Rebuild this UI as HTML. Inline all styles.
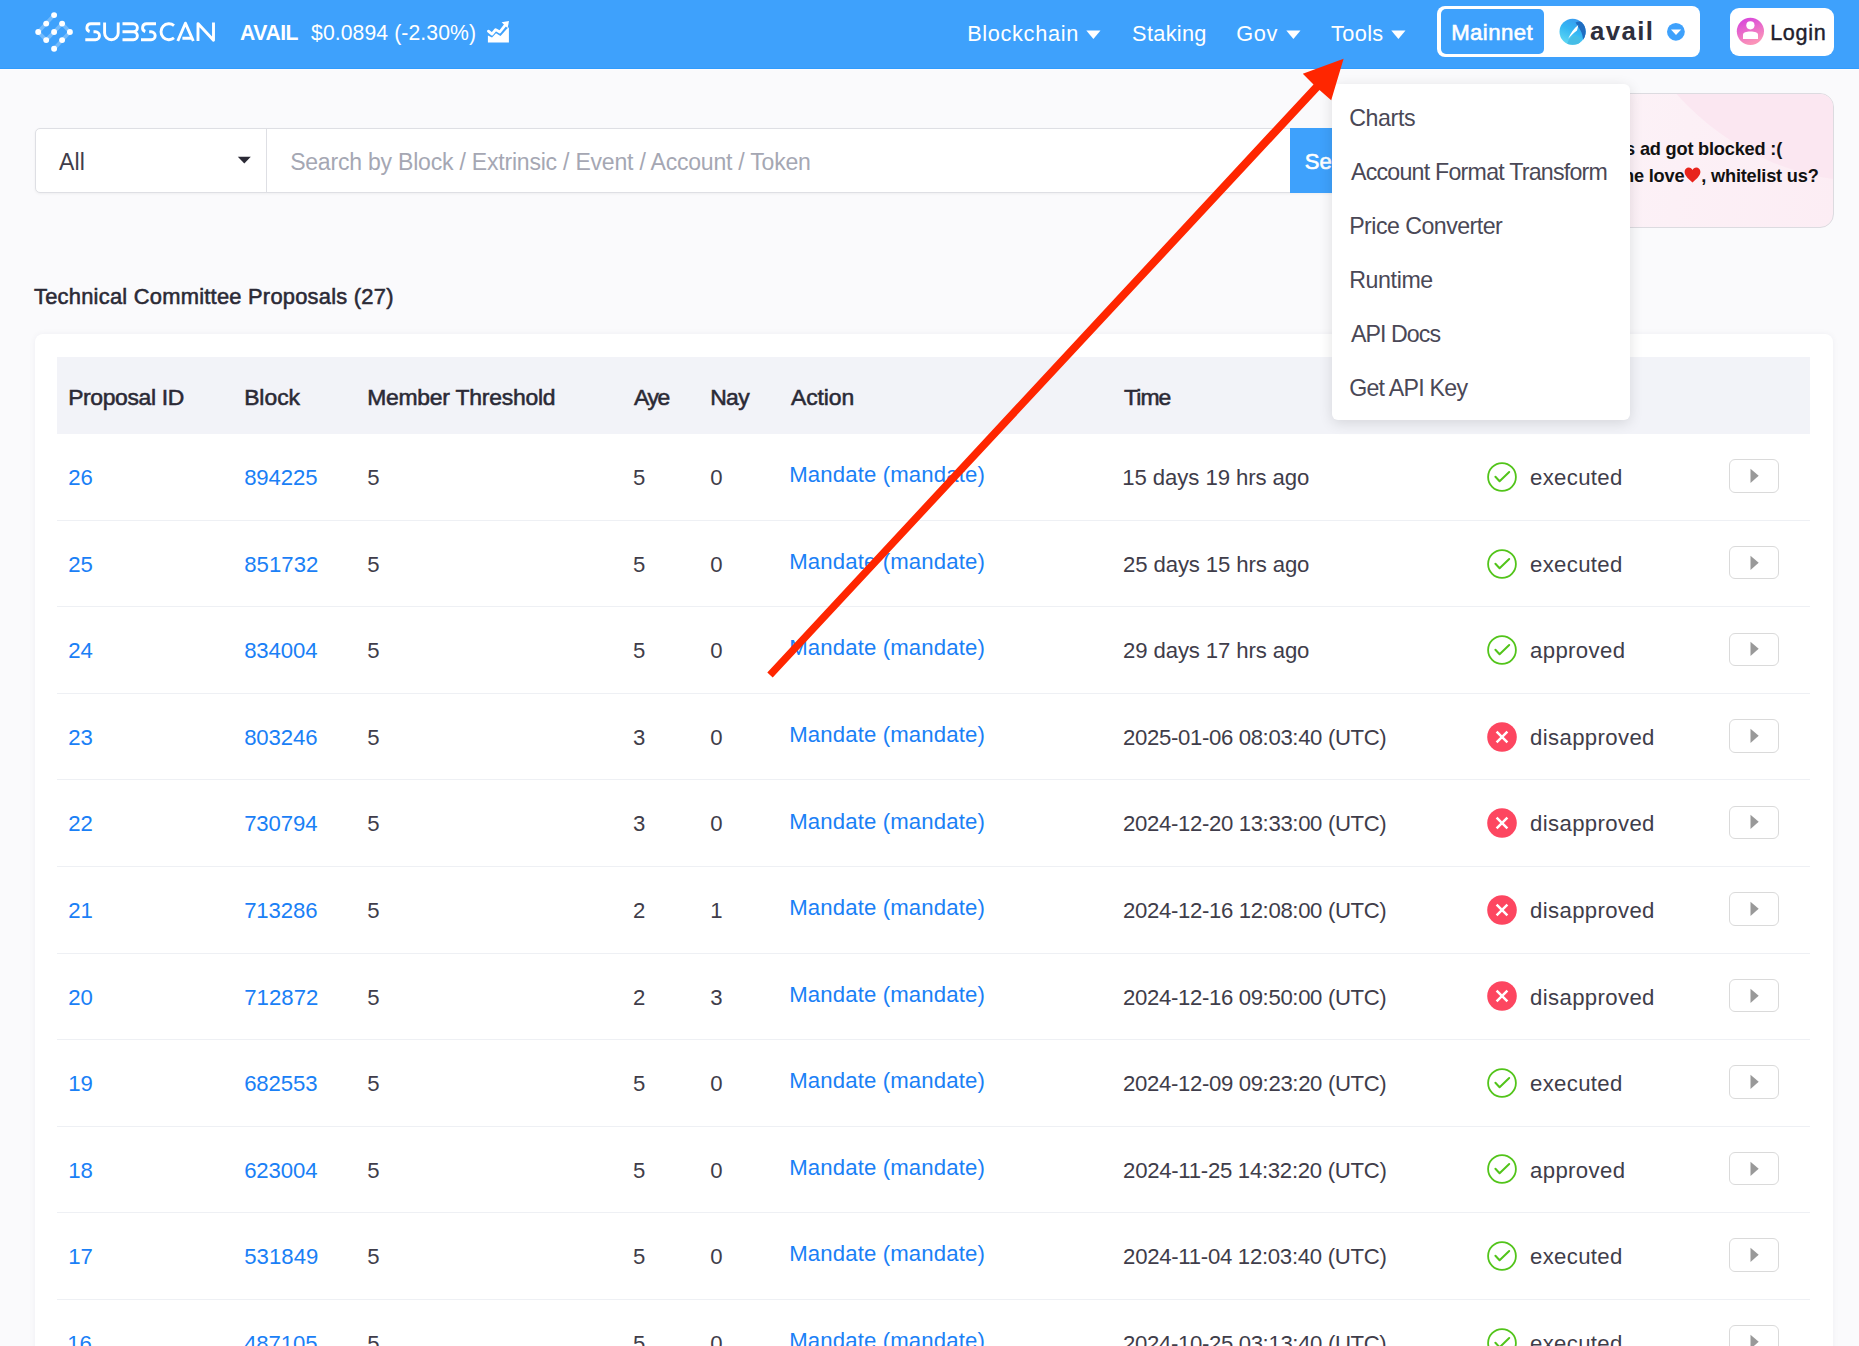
<!DOCTYPE html>
<html><head><meta charset="utf-8">
<style>
html,body{margin:0;padding:0;}
body{width:1859px;height:1346px;overflow:hidden;position:relative;background:#fafafc;font-family:"Liberation Sans",sans-serif;}
.t{position:absolute;white-space:nowrap;line-height:1;}
.abs{position:absolute;}
</style></head><body>
<div class="abs" style="left:0;top:0;width:1859px;height:68px;background:#3ea1fc;"></div>
<div class="abs" style="left:0;top:68px;width:1859px;height:1px;background:#309cfd;"></div>
<div class="abs" style="left:0;top:69px;width:1859px;height:1px;background:#fdfdff;"></div>
<svg class="abs" style="left:0;top:0" width="240" height="68" viewBox="0 0 240 68"><polyline points="54.1,15.1 38.2,32 46.2,40.1 62.1,23.6 69.9,32 54.1,48.7" fill="none" stroke="rgba(255,255,255,0.28)" stroke-width="3.6"/><circle cx="54.1" cy="15.1" r="2.95" fill="#fff"/><circle cx="46.2" cy="23.6" r="2.95" fill="#fff"/><circle cx="62.1" cy="23.6" r="2.95" fill="#fff"/><circle cx="38.2" cy="32" r="2.95" fill="#fff"/><circle cx="54.1" cy="32" r="2.95" fill="#fff"/><circle cx="69.9" cy="32" r="2.95" fill="#fff"/><circle cx="46.2" cy="40.1" r="2.95" fill="#fff"/><circle cx="62.1" cy="40.1" r="2.95" fill="#fff"/><circle cx="54.1" cy="48.7" r="2.95" fill="#fff"/><path d="M100.3,23.8 H90.8 A3.95,3.95 0 0 0 89.6,31.5 M93.5,31.75 H95.5 A3.95,3.95 0 0 1 95.5,39.7 H85.3" fill="none" stroke="#fff" stroke-width="2.9" stroke-linejoin="round"/><path d="M104.6,22.5 V32.9 A6.8,6.8 0 0 0 118.2,32.9 V22.5" fill="none" stroke="#fff" stroke-width="2.9" stroke-linejoin="round"/><path d="M122.5,23.8 H133.4 A3.97,3.97 0 0 1 133.4,31.75 H122.5 M133.4,31.75 A3.97,3.97 0 0 1 133.4,39.7 H122.5" fill="none" stroke="#fff" stroke-width="2.9" stroke-linejoin="round"/><path d="M156,23.8 H146.5 A3.95,3.95 0 0 0 145.3,31.5 M149.2,31.75 H151.2 A3.95,3.95 0 0 1 151.2,39.7 H141" fill="none" stroke="#fff" stroke-width="2.9" stroke-linejoin="round"/><path d="M174,25.6 A7.95,7.95 0 1 0 174,37.9" fill="none" stroke="#fff" stroke-width="2.9" stroke-linejoin="round"/><path d="M177.8,41 L185.4,23.2 L193.3,41 M182.4,38.2 H191.4" fill="none" stroke="#fff" stroke-width="2.9" stroke-linejoin="round"/><path d="M198,41 V23.6 L213.5,40.2 V22.5" fill="none" stroke="#fff" stroke-width="2.9" stroke-linejoin="round"/></svg>
<svg class="abs" style="left:482px;top:16px" width="32" height="32" viewBox="0 0 32 32"><path d="M5.9,26.6 V19.5 L10,21.4 L14,17.3 L18.5,19.9 L25,12.8 L26.9,11.2 V26.6 Z" fill="#fff"/><path d="M6.4,15.2 L10,18.1 L13.6,13.6 L17.8,16 L23.2,9.2" fill="none" stroke="#fff" stroke-width="2.8" stroke-linejoin="round" stroke-linecap="round"/><path d="M19.6,6.2 L27,5 L25.6,12.3 Z" fill="#fff"/></svg>
<svg class="abs" style="left:1086px;top:30px" width="15" height="10" viewBox="0 0 15 10"><path d="M0.3,0.6 H14.5 L7.4,8.9 Z" fill="#fff"/></svg>
<svg class="abs" style="left:1286px;top:30px" width="15" height="10" viewBox="0 0 15 10"><path d="M0.3,0.6 H14.5 L7.4,8.9 Z" fill="#fff"/></svg>
<svg class="abs" style="left:1391px;top:30px" width="15" height="10" viewBox="0 0 15 10"><path d="M0.3,0.6 H14.5 L7.4,8.9 Z" fill="#fff"/></svg>
<div class="abs" style="left:1437px;top:6px;width:263px;height:51px;background:#fff;border-radius:8px;"></div>
<div class="abs" style="left:1440.5px;top:9px;width:103.5px;height:45px;background:#3ea1fc;border-radius:5px;"></div>
<svg class="abs" style="left:1558px;top:17px" width="30" height="30" viewBox="0 0 30 30"><defs><linearGradient id="ag" x1="0.7" y1="0" x2="0.2" y2="1"><stop offset="0" stop-color="#3b95f0"/><stop offset="0.45" stop-color="#34b6f3"/><stop offset="1" stop-color="#6ae0f2"/></linearGradient><clipPath id="ac"><circle cx="14.6" cy="14.75" r="13.1"/></clipPath></defs><g clip-path="url(#ac)"><rect x="0" y="0" width="30" height="30" fill="url(#ag)"/><path d="M17.5,5.5 C21,4 25,4.5 27.5,6 L29,28 L25,27 C25.5,22 24.5,17 22.5,13.5 C21,11 19.5,8.5 17.5,5.5 Z" fill="#1f6cc0"/><path d="M9,29 C9.5,24 11.5,21 15,19.5 C18.5,18 21,19.5 22,22.5 C22.5,25 21.5,28 19,30 Z" fill="#46bde6"/><path d="M20.2,8 C16,11.5 12.5,16 10.2,21.8 C13,18.5 16,15.5 19,13.5 C19.6,11.5 20,9.8 20.2,8 Z" fill="#fff"/></g></svg>
<svg class="abs" style="left:1666px;top:22px" width="20" height="20" viewBox="0 0 20 20"><circle cx="9.9" cy="9.8" r="8.9" fill="#3ea1fc"/><path d="M5,7.4 H15.2 L10,13 Z" fill="#fff"/></svg>
<div class="abs" style="left:1730px;top:8px;width:104px;height:48px;background:#fff;border-radius:9px;"></div>
<svg class="abs" style="left:1736px;top:17px" width="30" height="30" viewBox="0 0 30 30"><defs><linearGradient id="lg" x1="0" y1="0" x2="0.4" y2="1"><stop offset="0" stop-color="#d33be0"/><stop offset="1" stop-color="#fb93b8"/></linearGradient></defs><circle cx="14.4" cy="14.3" r="13.6" fill="url(#lg)"/><circle cx="14.4" cy="8.3" r="4.1" fill="#fff"/><path d="M7,21.9 V17.8 C7,15.6 10,14.6 14.4,14.6 C18.8,14.6 22,15.6 22,17.8 V21.9 Z" fill="#fff"/></svg>
<div class="abs" style="left:35px;top:128px;width:1300px;height:63px;background:#fff;border:1px solid #dedfe4;border-radius:5px 0 0 5px;box-shadow:0 1px 3px rgba(0,0,0,0.05);"></div>
<div class="abs" style="left:266px;top:129px;width:1px;height:63px;background:#dedfe4;"></div>
<svg class="abs" style="left:237px;top:156px" width="15" height="9" viewBox="0 0 15 9"><path d="M0.8,0.8 H13.8 L7.3,7.6 Z" fill="#2b2a36"/></svg>
<div class="abs" style="left:1290px;top:128px;width:80px;height:65px;background:#3ea1fc;"></div>
<div class="abs" style="left:1450px;top:93px;width:382px;height:133px;border:1px solid #dcdbe0;border-radius:14px;background:linear-gradient(100deg,#fdf5f9 0%,#fcf0f6 60%,#fcedf4 100%);overflow:hidden;"><div class="abs" style="left:160px;top:-434px;width:522px;height:522px;border-radius:50%;background:#fbe7f1;"></div></div>
<div class="abs" style="left:35px;top:334px;width:1798px;height:1100px;background:#fff;border-radius:8px;box-shadow:0 0 6px rgba(40,40,80,0.05);"></div>
<div class="abs" style="left:57px;top:357px;width:1753px;height:77.4px;background:#f2f3f8;"></div>
<div class="abs" style="left:57px;top:520px;width:1753px;height:1px;background:#eef0f4;"></div>
<div class="abs" style="left:57px;top:606px;width:1753px;height:1px;background:#eef0f4;"></div>
<div class="abs" style="left:57px;top:693px;width:1753px;height:1px;background:#eef0f4;"></div>
<div class="abs" style="left:57px;top:779px;width:1753px;height:1px;background:#eef0f4;"></div>
<div class="abs" style="left:57px;top:866px;width:1753px;height:1px;background:#eef0f4;"></div>
<div class="abs" style="left:57px;top:953px;width:1753px;height:1px;background:#eef0f4;"></div>
<div class="abs" style="left:57px;top:1039px;width:1753px;height:1px;background:#eef0f4;"></div>
<div class="abs" style="left:57px;top:1126px;width:1753px;height:1px;background:#eef0f4;"></div>
<div class="abs" style="left:57px;top:1212px;width:1753px;height:1px;background:#eef0f4;"></div>
<div class="abs" style="left:57px;top:1299px;width:1753px;height:1px;background:#eef0f4;"></div>
<div class="abs" style="left:57px;top:1385px;width:1753px;height:1px;background:#eef0f4;"></div>
<svg class="abs" style="left:1486px;top:461.00px" width="32" height="32" viewBox="0 0 32 32"><circle cx="16" cy="16" r="13.9" fill="none" stroke="#52c41a" stroke-width="1.8"/><path d="M9.4,15.8 L13.6,20.3 L23.2,11" fill="none" stroke="#52c41a" stroke-width="2" stroke-linecap="round" stroke-linejoin="round"/></svg>
<div class="abs" style="left:1729px;top:459.40px;width:47.5px;height:31.5px;border:1px solid #dadada;border-radius:6px;background:#fff;"></div>
<svg class="abs" style="left:1748px;top:468.20px" width="14" height="18" viewBox="0 0 14 18"><path d="M2.5,0.7 L10.7,7.8 L2.5,14.9 Z" fill="#999999"/></svg>
<svg class="abs" style="left:1486px;top:547.56px" width="32" height="32" viewBox="0 0 32 32"><circle cx="16" cy="16" r="13.9" fill="none" stroke="#52c41a" stroke-width="1.8"/><path d="M9.4,15.8 L13.6,20.3 L23.2,11" fill="none" stroke="#52c41a" stroke-width="2" stroke-linecap="round" stroke-linejoin="round"/></svg>
<div class="abs" style="left:1729px;top:545.96px;width:47.5px;height:31.5px;border:1px solid #dadada;border-radius:6px;background:#fff;"></div>
<svg class="abs" style="left:1748px;top:554.76px" width="14" height="18" viewBox="0 0 14 18"><path d="M2.5,0.7 L10.7,7.8 L2.5,14.9 Z" fill="#999999"/></svg>
<svg class="abs" style="left:1486px;top:634.12px" width="32" height="32" viewBox="0 0 32 32"><circle cx="16" cy="16" r="13.9" fill="none" stroke="#52c41a" stroke-width="1.8"/><path d="M9.4,15.8 L13.6,20.3 L23.2,11" fill="none" stroke="#52c41a" stroke-width="2" stroke-linecap="round" stroke-linejoin="round"/></svg>
<div class="abs" style="left:1729px;top:632.52px;width:47.5px;height:31.5px;border:1px solid #dadada;border-radius:6px;background:#fff;"></div>
<svg class="abs" style="left:1748px;top:641.32px" width="14" height="18" viewBox="0 0 14 18"><path d="M2.5,0.7 L10.7,7.8 L2.5,14.9 Z" fill="#999999"/></svg>
<svg class="abs" style="left:1486px;top:720.68px" width="32" height="32" viewBox="0 0 32 32"><circle cx="16" cy="16" r="14.8" fill="#fd4660"/><path d="M10.6,10.6 L21.4,21.4 M21.4,10.6 L10.6,21.4" stroke="#fff" stroke-width="2.5" stroke-linecap="butt"/></svg>
<div class="abs" style="left:1729px;top:719.08px;width:47.5px;height:31.5px;border:1px solid #dadada;border-radius:6px;background:#fff;"></div>
<svg class="abs" style="left:1748px;top:727.88px" width="14" height="18" viewBox="0 0 14 18"><path d="M2.5,0.7 L10.7,7.8 L2.5,14.9 Z" fill="#999999"/></svg>
<svg class="abs" style="left:1486px;top:807.24px" width="32" height="32" viewBox="0 0 32 32"><circle cx="16" cy="16" r="14.8" fill="#fd4660"/><path d="M10.6,10.6 L21.4,21.4 M21.4,10.6 L10.6,21.4" stroke="#fff" stroke-width="2.5" stroke-linecap="butt"/></svg>
<div class="abs" style="left:1729px;top:805.64px;width:47.5px;height:31.5px;border:1px solid #dadada;border-radius:6px;background:#fff;"></div>
<svg class="abs" style="left:1748px;top:814.44px" width="14" height="18" viewBox="0 0 14 18"><path d="M2.5,0.7 L10.7,7.8 L2.5,14.9 Z" fill="#999999"/></svg>
<svg class="abs" style="left:1486px;top:893.80px" width="32" height="32" viewBox="0 0 32 32"><circle cx="16" cy="16" r="14.8" fill="#fd4660"/><path d="M10.6,10.6 L21.4,21.4 M21.4,10.6 L10.6,21.4" stroke="#fff" stroke-width="2.5" stroke-linecap="butt"/></svg>
<div class="abs" style="left:1729px;top:892.20px;width:47.5px;height:31.5px;border:1px solid #dadada;border-radius:6px;background:#fff;"></div>
<svg class="abs" style="left:1748px;top:901.00px" width="14" height="18" viewBox="0 0 14 18"><path d="M2.5,0.7 L10.7,7.8 L2.5,14.9 Z" fill="#999999"/></svg>
<svg class="abs" style="left:1486px;top:980.36px" width="32" height="32" viewBox="0 0 32 32"><circle cx="16" cy="16" r="14.8" fill="#fd4660"/><path d="M10.6,10.6 L21.4,21.4 M21.4,10.6 L10.6,21.4" stroke="#fff" stroke-width="2.5" stroke-linecap="butt"/></svg>
<div class="abs" style="left:1729px;top:978.76px;width:47.5px;height:31.5px;border:1px solid #dadada;border-radius:6px;background:#fff;"></div>
<svg class="abs" style="left:1748px;top:987.56px" width="14" height="18" viewBox="0 0 14 18"><path d="M2.5,0.7 L10.7,7.8 L2.5,14.9 Z" fill="#999999"/></svg>
<svg class="abs" style="left:1486px;top:1066.92px" width="32" height="32" viewBox="0 0 32 32"><circle cx="16" cy="16" r="13.9" fill="none" stroke="#52c41a" stroke-width="1.8"/><path d="M9.4,15.8 L13.6,20.3 L23.2,11" fill="none" stroke="#52c41a" stroke-width="2" stroke-linecap="round" stroke-linejoin="round"/></svg>
<div class="abs" style="left:1729px;top:1065.32px;width:47.5px;height:31.5px;border:1px solid #dadada;border-radius:6px;background:#fff;"></div>
<svg class="abs" style="left:1748px;top:1074.12px" width="14" height="18" viewBox="0 0 14 18"><path d="M2.5,0.7 L10.7,7.8 L2.5,14.9 Z" fill="#999999"/></svg>
<svg class="abs" style="left:1486px;top:1153.48px" width="32" height="32" viewBox="0 0 32 32"><circle cx="16" cy="16" r="13.9" fill="none" stroke="#52c41a" stroke-width="1.8"/><path d="M9.4,15.8 L13.6,20.3 L23.2,11" fill="none" stroke="#52c41a" stroke-width="2" stroke-linecap="round" stroke-linejoin="round"/></svg>
<div class="abs" style="left:1729px;top:1151.88px;width:47.5px;height:31.5px;border:1px solid #dadada;border-radius:6px;background:#fff;"></div>
<svg class="abs" style="left:1748px;top:1160.68px" width="14" height="18" viewBox="0 0 14 18"><path d="M2.5,0.7 L10.7,7.8 L2.5,14.9 Z" fill="#999999"/></svg>
<svg class="abs" style="left:1486px;top:1240.04px" width="32" height="32" viewBox="0 0 32 32"><circle cx="16" cy="16" r="13.9" fill="none" stroke="#52c41a" stroke-width="1.8"/><path d="M9.4,15.8 L13.6,20.3 L23.2,11" fill="none" stroke="#52c41a" stroke-width="2" stroke-linecap="round" stroke-linejoin="round"/></svg>
<div class="abs" style="left:1729px;top:1238.44px;width:47.5px;height:31.5px;border:1px solid #dadada;border-radius:6px;background:#fff;"></div>
<svg class="abs" style="left:1748px;top:1247.24px" width="14" height="18" viewBox="0 0 14 18"><path d="M2.5,0.7 L10.7,7.8 L2.5,14.9 Z" fill="#999999"/></svg>
<svg class="abs" style="left:1486px;top:1326.60px" width="32" height="32" viewBox="0 0 32 32"><circle cx="16" cy="16" r="13.9" fill="none" stroke="#52c41a" stroke-width="1.8"/><path d="M9.4,15.8 L13.6,20.3 L23.2,11" fill="none" stroke="#52c41a" stroke-width="2" stroke-linecap="round" stroke-linejoin="round"/></svg>
<div class="abs" style="left:1729px;top:1325.00px;width:47.5px;height:31.5px;border:1px solid #dadada;border-radius:6px;background:#fff;"></div>
<svg class="abs" style="left:1748px;top:1333.80px" width="14" height="18" viewBox="0 0 14 18"><path d="M2.5,0.7 L10.7,7.8 L2.5,14.9 Z" fill="#999999"/></svg>
<div class="abs" style="left:1332px;top:84px;width:298px;height:336px;background:#fff;border-radius:6px;box-shadow:0 3px 14px rgba(0,0,0,0.12);z-index:5;"></div>
<div id="texts" style="position:absolute;left:0;top:0;width:1859px;height:1346px;">
<div id="avail" class="t" style="left:240.10px;top:21.81px;font-size:21.16px;font-weight:700;color:#ffffff;letter-spacing:-0.472px;">AVAIL</div>
<div id="price" class="t" style="left:311.02px;top:21.81px;font-size:21.16px;font-weight:400;color:#ffffff;letter-spacing:0.102px;">$0.0894 (-2.30%)</div>
<div id="nav1" class="t" style="left:967.18px;top:22.72px;font-size:21.74px;font-weight:400;color:#ffffff;letter-spacing:0.660px;">Blockchain</div>
<div id="nav2" class="t" style="left:1132.08px;top:22.72px;font-size:21.74px;font-weight:400;color:#ffffff;letter-spacing:0.315px;">Staking</div>
<div id="nav3" class="t" style="left:1236.15px;top:22.72px;font-size:21.74px;font-weight:400;color:#ffffff;letter-spacing:0.675px;">Gov</div>
<div id="nav4" class="t" style="left:1331.09px;top:22.72px;font-size:21.74px;font-weight:400;color:#ffffff;letter-spacing:0.338px;">Tools</div>
<div id="mainnet" class="t" style="left:1451.20px;top:22.15px;font-size:22.17px;font-weight:400;color:#ffffff;letter-spacing:0.420px;-webkit-text-stroke:0.6px #fff;">Mainnet</div>
<div id="availtxt" class="t" style="left:1590.10px;top:18.77px;font-size:25.80px;font-weight:700;color:#2e2f3d;letter-spacing:1.350px;">avail</div>
<div id="login" class="t" style="left:1770.14px;top:22.24px;font-size:21.59px;font-weight:400;color:#22202c;letter-spacing:0.720px;-webkit-text-stroke:0.4px #22202c;">Login</div>
<div id="all" class="t" style="left:59.05px;top:150.51px;font-size:23.04px;font-weight:400;color:#3f3d4a;letter-spacing:0.090px;">All</div>
<div id="ph" class="t" style="left:290.14px;top:150.51px;font-size:23.04px;font-weight:400;color:#a5a7b3;letter-spacing:-0.218px;">Search by Block / Extrinsic / Event / Account / Token</div>
<div id="se" class="t" style="left:1304.78px;top:151.18px;font-size:22.03px;font-weight:400;color:#ffffff;letter-spacing:0.000px;-webkit-text-stroke:0.6px #fff;">Se</div>
<div id="title" class="t" style="left:34.02px;top:286.30px;font-size:21.88px;font-weight:400;color:#2b2a36;letter-spacing:0.245px;-webkit-text-stroke:0.55px #2b2a36;">Technical Committee Proposals (27)</div>
<div id="h1" class="t" style="left:68.14px;top:386.04px;font-size:22.90px;font-weight:400;color:#2b2a36;letter-spacing:-0.351px;-webkit-text-stroke:0.55px #2b2a36;">Proposal ID</div>
<div id="h2" class="t" style="left:244.14px;top:386.04px;font-size:22.90px;font-weight:400;color:#2b2a36;letter-spacing:-0.023px;-webkit-text-stroke:0.55px #2b2a36;">Block</div>
<div id="h3" class="t" style="left:367.14px;top:386.04px;font-size:22.90px;font-weight:400;color:#2b2a36;letter-spacing:-0.216px;-webkit-text-stroke:0.55px #2b2a36;">Member Threshold</div>
<div id="h4" class="t" style="left:634.00px;top:386.04px;font-size:22.90px;font-weight:400;color:#2b2a36;letter-spacing:-1.350px;-webkit-text-stroke:0.55px #2b2a36;">Aye</div>
<div id="h5" class="t" style="left:710.14px;top:386.04px;font-size:22.90px;font-weight:400;color:#2b2a36;letter-spacing:-0.540px;-webkit-text-stroke:0.55px #2b2a36;">Nay</div>
<div id="h6" class="t" style="left:790.99px;top:386.04px;font-size:22.90px;font-weight:400;color:#2b2a36;letter-spacing:-0.090px;-webkit-text-stroke:0.55px #2b2a36;">Action</div>
<div id="h7" class="t" style="left:1124.00px;top:386.04px;font-size:22.90px;font-weight:400;color:#2b2a36;letter-spacing:-0.900px;-webkit-text-stroke:0.55px #2b2a36;">Time</div>
<div id="r0id" class="t" style="left:68.16px;top:467.25px;font-size:22.17px;font-weight:400;color:#1a80f6;letter-spacing:0.000px;">26</div>
<div id="r0bl" class="t" style="left:244.14px;top:467.25px;font-size:22.17px;font-weight:400;color:#1a80f6;letter-spacing:-0.108px;">894225</div>
<div id="r0mt" class="t" style="left:367.14px;top:467.25px;font-size:22.17px;font-weight:400;color:#3f3d4a;letter-spacing:0.000px;">5</div>
<div id="r0aye" class="t" style="left:633.10px;top:467.25px;font-size:22.17px;font-weight:400;color:#3f3d4a;letter-spacing:0.000px;">5</div>
<div id="r0nay" class="t" style="left:710.14px;top:467.25px;font-size:22.17px;font-weight:400;color:#3f3d4a;letter-spacing:0.000px;">0</div>
<div id="r0act" class="t" style="left:789.19px;top:464.35px;font-size:22.17px;font-weight:400;color:#1a80f6;letter-spacing:0.146px;">Mandate (mandate)</div>
<div id="r0time" class="t" style="left:1122.22px;top:467.25px;font-size:22.17px;font-weight:400;color:#3f3d4a;letter-spacing:-0.074px;">15 days 19 hrs ago</div>
<div id="r0st" class="t" style="left:1530.08px;top:467.25px;font-size:22.17px;font-weight:400;color:#3f3d4a;letter-spacing:0.321px;">executed</div>
<div id="r1id" class="t" style="left:68.16px;top:553.81px;font-size:22.17px;font-weight:400;color:#1a80f6;letter-spacing:0.000px;">25</div>
<div id="r1bl" class="t" style="left:244.14px;top:553.81px;font-size:22.17px;font-weight:400;color:#1a80f6;letter-spacing:0.072px;">851732</div>
<div id="r1mt" class="t" style="left:367.14px;top:553.81px;font-size:22.17px;font-weight:400;color:#3f3d4a;letter-spacing:0.000px;">5</div>
<div id="r1aye" class="t" style="left:633.10px;top:553.81px;font-size:22.17px;font-weight:400;color:#3f3d4a;letter-spacing:0.000px;">5</div>
<div id="r1nay" class="t" style="left:710.14px;top:553.81px;font-size:22.17px;font-weight:400;color:#3f3d4a;letter-spacing:0.000px;">0</div>
<div id="r1act" class="t" style="left:789.19px;top:550.91px;font-size:22.17px;font-weight:400;color:#1a80f6;letter-spacing:0.146px;">Mandate (mandate)</div>
<div id="r1time" class="t" style="left:1123.12px;top:553.81px;font-size:22.17px;font-weight:400;color:#3f3d4a;letter-spacing:-0.127px;">25 days 15 hrs ago</div>
<div id="r1st" class="t" style="left:1530.08px;top:553.81px;font-size:22.17px;font-weight:400;color:#3f3d4a;letter-spacing:0.321px;">executed</div>
<div id="r2id" class="t" style="left:68.16px;top:640.37px;font-size:22.17px;font-weight:400;color:#1a80f6;letter-spacing:0.000px;">24</div>
<div id="r2bl" class="t" style="left:244.14px;top:640.37px;font-size:22.17px;font-weight:400;color:#1a80f6;letter-spacing:-0.108px;">834004</div>
<div id="r2mt" class="t" style="left:367.14px;top:640.37px;font-size:22.17px;font-weight:400;color:#3f3d4a;letter-spacing:0.000px;">5</div>
<div id="r2aye" class="t" style="left:633.10px;top:640.37px;font-size:22.17px;font-weight:400;color:#3f3d4a;letter-spacing:0.000px;">5</div>
<div id="r2nay" class="t" style="left:710.14px;top:640.37px;font-size:22.17px;font-weight:400;color:#3f3d4a;letter-spacing:0.000px;">0</div>
<div id="r2act" class="t" style="left:789.19px;top:637.47px;font-size:22.17px;font-weight:400;color:#1a80f6;letter-spacing:0.146px;">Mandate (mandate)</div>
<div id="r2time" class="t" style="left:1123.12px;top:640.37px;font-size:22.17px;font-weight:400;color:#3f3d4a;letter-spacing:-0.127px;">29 days 17 hrs ago</div>
<div id="r2st" class="t" style="left:1530.08px;top:640.37px;font-size:22.17px;font-weight:400;color:#3f3d4a;letter-spacing:0.360px;">approved</div>
<div id="r3id" class="t" style="left:68.16px;top:726.93px;font-size:22.17px;font-weight:400;color:#1a80f6;letter-spacing:0.000px;">23</div>
<div id="r3bl" class="t" style="left:244.14px;top:726.93px;font-size:22.17px;font-weight:400;color:#1a80f6;letter-spacing:-0.108px;">803246</div>
<div id="r3mt" class="t" style="left:367.14px;top:726.93px;font-size:22.17px;font-weight:400;color:#3f3d4a;letter-spacing:0.000px;">5</div>
<div id="r3aye" class="t" style="left:633.10px;top:726.93px;font-size:22.17px;font-weight:400;color:#3f3d4a;letter-spacing:0.000px;">3</div>
<div id="r3nay" class="t" style="left:710.14px;top:726.93px;font-size:22.17px;font-weight:400;color:#3f3d4a;letter-spacing:0.000px;">0</div>
<div id="r3act" class="t" style="left:789.19px;top:724.03px;font-size:22.17px;font-weight:400;color:#1a80f6;letter-spacing:0.146px;">Mandate (mandate)</div>
<div id="r3time" class="t" style="left:1123.12px;top:726.93px;font-size:22.17px;font-weight:400;color:#3f3d4a;letter-spacing:-0.356px;">2025-01-06 08:03:40 (UTC)</div>
<div id="r3st" class="t" style="left:1530.08px;top:726.93px;font-size:22.17px;font-weight:400;color:#3f3d4a;letter-spacing:0.360px;">disapproved</div>
<div id="r4id" class="t" style="left:68.16px;top:813.49px;font-size:22.17px;font-weight:400;color:#1a80f6;letter-spacing:0.000px;">22</div>
<div id="r4bl" class="t" style="left:244.14px;top:813.49px;font-size:22.17px;font-weight:400;color:#1a80f6;letter-spacing:-0.108px;">730794</div>
<div id="r4mt" class="t" style="left:367.14px;top:813.49px;font-size:22.17px;font-weight:400;color:#3f3d4a;letter-spacing:0.000px;">5</div>
<div id="r4aye" class="t" style="left:633.10px;top:813.49px;font-size:22.17px;font-weight:400;color:#3f3d4a;letter-spacing:0.000px;">3</div>
<div id="r4nay" class="t" style="left:710.14px;top:813.49px;font-size:22.17px;font-weight:400;color:#3f3d4a;letter-spacing:0.000px;">0</div>
<div id="r4act" class="t" style="left:789.19px;top:810.59px;font-size:22.17px;font-weight:400;color:#1a80f6;letter-spacing:0.146px;">Mandate (mandate)</div>
<div id="r4time" class="t" style="left:1123.12px;top:813.49px;font-size:22.17px;font-weight:400;color:#3f3d4a;letter-spacing:-0.356px;">2024-12-20 13:33:00 (UTC)</div>
<div id="r4st" class="t" style="left:1530.08px;top:813.49px;font-size:22.17px;font-weight:400;color:#3f3d4a;letter-spacing:0.360px;">disapproved</div>
<div id="r5id" class="t" style="left:68.16px;top:900.05px;font-size:22.17px;font-weight:400;color:#1a80f6;letter-spacing:0.000px;">21</div>
<div id="r5bl" class="t" style="left:244.14px;top:900.05px;font-size:22.17px;font-weight:400;color:#1a80f6;letter-spacing:-0.108px;">713286</div>
<div id="r5mt" class="t" style="left:367.14px;top:900.05px;font-size:22.17px;font-weight:400;color:#3f3d4a;letter-spacing:0.000px;">5</div>
<div id="r5aye" class="t" style="left:633.10px;top:900.05px;font-size:22.17px;font-weight:400;color:#3f3d4a;letter-spacing:0.000px;">2</div>
<div id="r5nay" class="t" style="left:710.14px;top:900.05px;font-size:22.17px;font-weight:400;color:#3f3d4a;letter-spacing:0.000px;">1</div>
<div id="r5act" class="t" style="left:789.19px;top:897.15px;font-size:22.17px;font-weight:400;color:#1a80f6;letter-spacing:0.146px;">Mandate (mandate)</div>
<div id="r5time" class="t" style="left:1123.12px;top:900.05px;font-size:22.17px;font-weight:400;color:#3f3d4a;letter-spacing:-0.356px;">2024-12-16 12:08:00 (UTC)</div>
<div id="r5st" class="t" style="left:1530.08px;top:900.05px;font-size:22.17px;font-weight:400;color:#3f3d4a;letter-spacing:0.360px;">disapproved</div>
<div id="r6id" class="t" style="left:68.16px;top:986.61px;font-size:22.17px;font-weight:400;color:#1a80f6;letter-spacing:0.000px;">20</div>
<div id="r6bl" class="t" style="left:244.14px;top:986.61px;font-size:22.17px;font-weight:400;color:#1a80f6;letter-spacing:0.072px;">712872</div>
<div id="r6mt" class="t" style="left:367.14px;top:986.61px;font-size:22.17px;font-weight:400;color:#3f3d4a;letter-spacing:0.000px;">5</div>
<div id="r6aye" class="t" style="left:633.10px;top:986.61px;font-size:22.17px;font-weight:400;color:#3f3d4a;letter-spacing:0.000px;">2</div>
<div id="r6nay" class="t" style="left:710.14px;top:986.61px;font-size:22.17px;font-weight:400;color:#3f3d4a;letter-spacing:0.000px;">3</div>
<div id="r6act" class="t" style="left:789.19px;top:983.71px;font-size:22.17px;font-weight:400;color:#1a80f6;letter-spacing:0.146px;">Mandate (mandate)</div>
<div id="r6time" class="t" style="left:1123.12px;top:986.61px;font-size:22.17px;font-weight:400;color:#3f3d4a;letter-spacing:-0.356px;">2024-12-16 09:50:00 (UTC)</div>
<div id="r6st" class="t" style="left:1530.08px;top:986.61px;font-size:22.17px;font-weight:400;color:#3f3d4a;letter-spacing:0.360px;">disapproved</div>
<div id="r7id" class="t" style="left:68.16px;top:1073.17px;font-size:22.17px;font-weight:400;color:#1a80f6;letter-spacing:0.000px;">19</div>
<div id="r7bl" class="t" style="left:244.14px;top:1073.17px;font-size:22.17px;font-weight:400;color:#1a80f6;letter-spacing:-0.108px;">682553</div>
<div id="r7mt" class="t" style="left:367.14px;top:1073.17px;font-size:22.17px;font-weight:400;color:#3f3d4a;letter-spacing:0.000px;">5</div>
<div id="r7aye" class="t" style="left:633.10px;top:1073.17px;font-size:22.17px;font-weight:400;color:#3f3d4a;letter-spacing:0.000px;">5</div>
<div id="r7nay" class="t" style="left:710.14px;top:1073.17px;font-size:22.17px;font-weight:400;color:#3f3d4a;letter-spacing:0.000px;">0</div>
<div id="r7act" class="t" style="left:789.19px;top:1070.27px;font-size:22.17px;font-weight:400;color:#1a80f6;letter-spacing:0.146px;">Mandate (mandate)</div>
<div id="r7time" class="t" style="left:1123.12px;top:1073.17px;font-size:22.17px;font-weight:400;color:#3f3d4a;letter-spacing:-0.356px;">2024-12-09 09:23:20 (UTC)</div>
<div id="r7st" class="t" style="left:1530.08px;top:1073.17px;font-size:22.17px;font-weight:400;color:#3f3d4a;letter-spacing:0.321px;">executed</div>
<div id="r8id" class="t" style="left:68.16px;top:1159.73px;font-size:22.17px;font-weight:400;color:#1a80f6;letter-spacing:0.000px;">18</div>
<div id="r8bl" class="t" style="left:244.14px;top:1159.73px;font-size:22.17px;font-weight:400;color:#1a80f6;letter-spacing:-0.108px;">623004</div>
<div id="r8mt" class="t" style="left:367.14px;top:1159.73px;font-size:22.17px;font-weight:400;color:#3f3d4a;letter-spacing:0.000px;">5</div>
<div id="r8aye" class="t" style="left:633.10px;top:1159.73px;font-size:22.17px;font-weight:400;color:#3f3d4a;letter-spacing:0.000px;">5</div>
<div id="r8nay" class="t" style="left:710.14px;top:1159.73px;font-size:22.17px;font-weight:400;color:#3f3d4a;letter-spacing:0.000px;">0</div>
<div id="r8act" class="t" style="left:789.19px;top:1156.83px;font-size:22.17px;font-weight:400;color:#1a80f6;letter-spacing:0.146px;">Mandate (mandate)</div>
<div id="r8time" class="t" style="left:1123.12px;top:1159.73px;font-size:22.17px;font-weight:400;color:#3f3d4a;letter-spacing:-0.281px;">2024-11-25 14:32:20 (UTC)</div>
<div id="r8st" class="t" style="left:1530.08px;top:1159.73px;font-size:22.17px;font-weight:400;color:#3f3d4a;letter-spacing:0.360px;">approved</div>
<div id="r9id" class="t" style="left:68.16px;top:1246.29px;font-size:22.17px;font-weight:400;color:#1a80f6;letter-spacing:0.000px;">17</div>
<div id="r9bl" class="t" style="left:244.14px;top:1246.29px;font-size:22.17px;font-weight:400;color:#1a80f6;letter-spacing:0.072px;">531849</div>
<div id="r9mt" class="t" style="left:367.14px;top:1246.29px;font-size:22.17px;font-weight:400;color:#3f3d4a;letter-spacing:0.000px;">5</div>
<div id="r9aye" class="t" style="left:633.10px;top:1246.29px;font-size:22.17px;font-weight:400;color:#3f3d4a;letter-spacing:0.000px;">5</div>
<div id="r9nay" class="t" style="left:710.14px;top:1246.29px;font-size:22.17px;font-weight:400;color:#3f3d4a;letter-spacing:0.000px;">0</div>
<div id="r9act" class="t" style="left:789.19px;top:1243.39px;font-size:22.17px;font-weight:400;color:#1a80f6;letter-spacing:0.146px;">Mandate (mandate)</div>
<div id="r9time" class="t" style="left:1123.12px;top:1246.29px;font-size:22.17px;font-weight:400;color:#3f3d4a;letter-spacing:-0.281px;">2024-11-04 12:03:40 (UTC)</div>
<div id="r9st" class="t" style="left:1530.08px;top:1246.29px;font-size:22.17px;font-weight:400;color:#3f3d4a;letter-spacing:0.321px;">executed</div>
<div id="r10id" class="t" style="left:67.26px;top:1332.85px;font-size:22.17px;font-weight:400;color:#1a80f6;letter-spacing:0.000px;">16</div>
<div id="r10bl" class="t" style="left:244.14px;top:1332.85px;font-size:22.17px;font-weight:400;color:#1a80f6;letter-spacing:-0.108px;">487105</div>
<div id="r10mt" class="t" style="left:367.14px;top:1332.85px;font-size:22.17px;font-weight:400;color:#3f3d4a;letter-spacing:0.000px;">5</div>
<div id="r10aye" class="t" style="left:633.10px;top:1332.85px;font-size:22.17px;font-weight:400;color:#3f3d4a;letter-spacing:0.000px;">5</div>
<div id="r10nay" class="t" style="left:710.14px;top:1332.85px;font-size:22.17px;font-weight:400;color:#3f3d4a;letter-spacing:0.000px;">0</div>
<div id="r10act" class="t" style="left:789.19px;top:1329.95px;font-size:22.17px;font-weight:400;color:#1a80f6;letter-spacing:0.146px;">Mandate (mandate)</div>
<div id="r10time" class="t" style="left:1123.12px;top:1332.85px;font-size:22.17px;font-weight:400;color:#3f3d4a;letter-spacing:-0.356px;">2024-10-25 03:13:40 (UTC)</div>
<div id="r10st" class="t" style="left:1530.08px;top:1332.85px;font-size:22.17px;font-weight:400;color:#3f3d4a;letter-spacing:0.321px;">executed</div>
<div id="dd0" class="t" style="left:1349.17px;top:106.79px;font-size:23.19px;font-weight:400;color:#4a4856;letter-spacing:-0.378px;z-index:6;">Charts</div>
<div id="dd1" class="t" style="left:1350.97px;top:160.79px;font-size:23.19px;font-weight:400;color:#4a4856;letter-spacing:-0.763px;z-index:6;">Account Format Transform</div>
<div id="dd2" class="t" style="left:1349.17px;top:214.79px;font-size:23.19px;font-weight:400;color:#4a4856;letter-spacing:-0.534px;z-index:6;">Price Converter</div>
<div id="dd3" class="t" style="left:1349.17px;top:268.79px;font-size:23.19px;font-weight:400;color:#4a4856;letter-spacing:-0.375px;z-index:6;">Runtime</div>
<div id="dd4" class="t" style="left:1350.97px;top:322.79px;font-size:23.19px;font-weight:400;color:#4a4856;letter-spacing:-0.939px;z-index:6;">API Docs</div>
<div id="dd5" class="t" style="left:1349.17px;top:376.79px;font-size:23.19px;font-weight:400;color:#4a4856;letter-spacing:-0.747px;z-index:6;">Get API Key</div>
<div id="ad1" class="t" style="right:77.00px;top:140.03px;font-size:18.20px;font-weight:700;color:#111;letter-spacing:-0.200px;">Looks like this ad got blocked :(</div>
<div id="ad2" class="t" style="right:40.43px;top:166.83px;font-size:18.20px;font-weight:700;color:#111;letter-spacing:-0.200px;">Show us some love<svg width="17" height="16" viewBox="0 0 17 16" style="vertical-align:-1px"><path d="M8.5,15.5 C3,11 0.6,8 0.6,4.8 C0.6,2.2 2.6,0.5 4.7,0.5 C6.5,0.5 7.8,1.6 8.5,3 C9.2,1.6 10.5,0.5 12.3,0.5 C14.4,0.5 16.4,2.2 16.4,4.8 C16.4,8 14,11 8.5,15.5 Z" fill="#e8231b"/></svg>, whitelist us?</div>
</div>
<svg class="abs" style="left:0;top:0;z-index:10" width="1859" height="1346" viewBox="0 0 1859 1346"><polygon points="1343.6,58.7 1331.2,100.2 1319.5,90.1 772.7,677.4 767.3,672.6 1313.5,84.4 1302.8,73.8" fill="#ff2600"/></svg>
</body></html>
